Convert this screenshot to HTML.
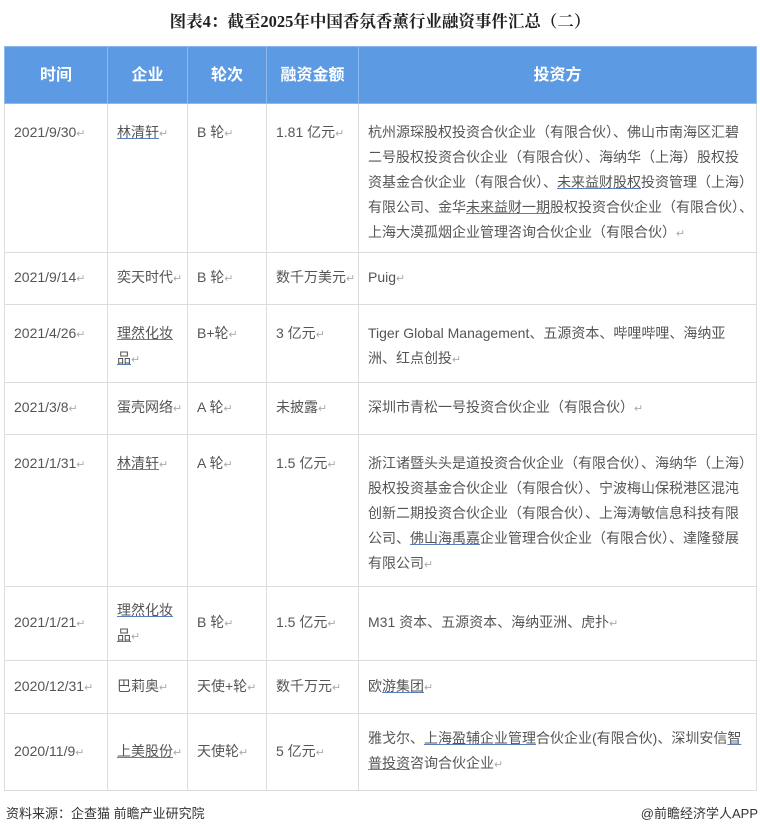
<!DOCTYPE html>
<html><head><meta charset="utf-8"><style>
body{margin:0;width:760px;height:833px;background:#fff;font-family:"Liberation Sans","Noto Sans CJK SC",sans-serif;color:#555;position:relative;overflow:hidden}
.title{position:absolute;top:8px;left:0;width:760px;text-align:center;font-family:"Liberation Serif","Noto Serif CJK SC",serif;font-weight:bold;font-size:16.5px;color:#222}
table{position:absolute;left:4px;top:46px;border-collapse:collapse;table-layout:fixed;width:752px}
td,th{border:1px solid #dcdcdc;padding:0 0 0 9px;font-size:14px;line-height:25px;white-space:nowrap;vertical-align:middle;text-align:left;font-weight:normal}
th{background:#5c9be4;color:#fff;font-size:16px;font-weight:bold;text-align:center;padding:0;border-color:#8fb9ec}
td.t{vertical-align:top;padding-top:16px}
.u{text-decoration:underline;text-decoration-color:#5a7fc0}
.r{color:#aaa;font-size:11px}
.foot{position:absolute;top:803px;font-size:13px;color:#333}
</style></head><body>
<div class="title">图表4：截至2025年中国香氛香薰行业融资事件汇总（二）</div>
<table>
<colgroup><col style="width:103px"><col style="width:80px"><col style="width:79px"><col style="width:92px"><col style="width:398px"></colgroup>
<tr style="height:57px"><th>时间</th><th>企业</th><th>轮次</th><th>融资金额</th><th>投资方</th></tr>
<tr style="height:149px"><td class="t">2021/9/30<span class="r">↵</span></td><td class="t"><span class="u">林清轩</span><span class="r">↵</span></td><td class="t">B 轮<span class="r">↵</span></td><td class="t">1.81 亿元<span class="r">↵</span></td><td class="t">杭州源琛股权投资合伙企业（有限合伙）、佛山市南海区汇碧<br>二号股权投资合伙企业（有限合伙）、海纳华（上海）股权投<br>资基金合伙企业（有限合伙）、<span class="u">未来益财股权</span>投资管理（上海）<br>有限公司、金华<span class="u">未来益财一期</span>股权投资合伙企业（有限合伙）、<br>上海大漠孤烟企业管理咨询合伙企业（有限合伙）<span class="r">↵</span></td></tr>
<tr style="height:52px"><td>2021/9/14<span class="r">↵</span></td><td>奕天时代<span class="r">↵</span></td><td>B 轮<span class="r">↵</span></td><td>数千万美元<span class="r">↵</span></td><td>Puig<span class="r">↵</span></td></tr>
<tr style="height:78px"><td class="t">2021/4/26<span class="r">↵</span></td><td class="t"><span class="u">理然化妆</span><br><span class="u">品</span><span class="r">↵</span></td><td class="t">B+轮<span class="r">↵</span></td><td class="t">3 亿元<span class="r">↵</span></td><td class="t">Tiger Global Management、五源资本、哔哩哔哩、海纳亚<br>洲、红点创投<span class="r">↵</span></td></tr>
<tr style="height:52px"><td>2021/3/8<span class="r">↵</span></td><td>蛋壳网络<span class="r">↵</span></td><td>A 轮<span class="r">↵</span></td><td>未披露<span class="r">↵</span></td><td>深圳市青松一号投资合伙企业（有限合伙）<span class="r">↵</span></td></tr>
<tr style="height:152px"><td class="t">2021/1/31<span class="r">↵</span></td><td class="t"><span class="u">林清轩</span><span class="r">↵</span></td><td class="t">A 轮<span class="r">↵</span></td><td class="t">1.5 亿元<span class="r">↵</span></td><td class="t">浙江诸暨头头是道投资合伙企业（有限合伙）、海纳华（上海）<br>股权投资基金合伙企业（有限合伙）、宁波梅山保税港区混沌<br>创新二期投资合伙企业（有限合伙）、上海涛敏信息科技有限<br>公司、<span class="u">佛山海禹嘉</span>企业管理合伙企业（有限合伙）、達隆發展<br>有限公司<span class="r">↵</span></td></tr>
<tr style="height:74px"><td>2021/1/21<span class="r">↵</span></td><td><span class="u">理然化妆</span><br><span class="u">品</span><span class="r">↵</span></td><td>B 轮<span class="r">↵</span></td><td>1.5 亿元<span class="r">↵</span></td><td>M31 资本、五源资本、海纳亚洲、虎扑<span class="r">↵</span></td></tr>
<tr style="height:53px"><td>2020/12/31<span class="r">↵</span></td><td>巴莉奥<span class="r">↵</span></td><td>天使+轮<span class="r">↵</span></td><td>数千万元<span class="r">↵</span></td><td>欧<span class="u">游集团</span><span class="r">↵</span></td></tr>
<tr style="height:77px"><td>2020/11/9<span class="r">↵</span></td><td><span class="u">上美股份</span><span class="r">↵</span></td><td>天使轮<span class="r">↵</span></td><td>5 亿元<span class="r">↵</span></td><td>雅戈尔、<span class="u">上海盈辅企业管理</span>合伙企业(有限合伙)、深圳安信<span class="u">智</span><br><span class="u">普投资</span>咨询合伙企业<span class="r">↵</span></td></tr>
</table>
<div class="foot" style="left:6px">资料来源：企查猫 前瞻产业研究院</div>
<div class="foot" style="right:2px">@前瞻经济学人APP</div>
</body></html>
